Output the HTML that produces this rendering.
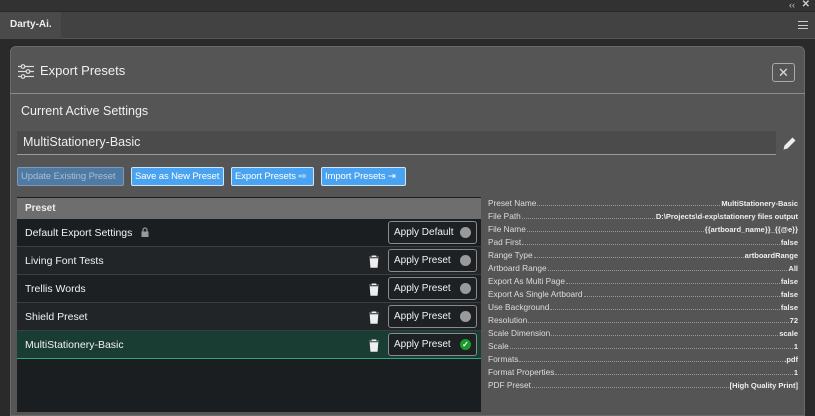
<!DOCTYPE html>
<html><head><style>
*{box-sizing:border-box;margin:0;padding:0}
body{width:815px;height:412px;overflow:hidden;background:#2a2a2a;font-family:"Liberation Sans",sans-serif;color:#eee;position:relative}
.abs{position:absolute}
.btn{position:absolute;top:167px;height:19px;background:#4aa3f0;border:1px solid #cfe6fb;border-radius:2px;color:#fff;font-size:9.5px;line-height:17px;padding:0 3px;white-space:nowrap;overflow:hidden;letter-spacing:-0.1px}
.row{position:absolute;left:17px;width:464px;height:28px;border-bottom:1px solid #3c3f42;font-size:10.5px;line-height:28px;padding-left:8px;color:#f2f2f2}
.ap{position:absolute;right:4px;top:2px;width:89px;height:23px;border:1px solid #8a8a8a;border-radius:3px;background:#1e2124;font-size:10px;line-height:21px;padding-left:5px}
.dot{position:absolute;right:5px;top:5px;width:11px;height:11px;border-radius:50%;background:#9a9a9a}
.tr{position:absolute;left:351px;top:8px;width:12px;height:13px}
.det{position:absolute;left:488px;width:310px;font-size:8.3px;height:13px;line-height:13px;color:#ddd;display:flex}
.det .k{white-space:nowrap}
.det .d{flex:1;border-bottom:1px dotted #999;margin:0 1px 4px}
.det .v{white-space:nowrap;font-size:7.5px;font-weight:bold;color:#eee}
</style></head><body>
<div class="abs" style="left:0;top:0;width:815px;height:11px;background:#323232"></div>
<div class="abs" style="right:20px;top:0;font-size:9px;color:#ccc;line-height:10px">‹‹</div>
<div class="abs" style="right:5px;top:0;font-size:10px;color:#ccc;line-height:10px;font-weight:bold">✕</div>
<div class="abs" style="left:0;top:11px;width:815px;height:28px;background:#424242;border-top:1px solid #2a2a2a;border-bottom:1px solid #555"></div>
<div class="abs" style="left:0;top:12px;width:61px;height:27px;background:#4a4a4a;font-size:10px;font-weight:bold;line-height:25px;padding-left:10px;color:#eee">Darty-Ai.</div>
<div class="abs" style="left:798px;top:21px;width:10px;height:8px;border-top:1px solid #ccc;border-bottom:1px solid #ccc"><div style="margin-top:2.5px;border-top:1px solid #ccc"></div></div>
<div class="abs" style="left:10px;top:46px;width:795px;height:370px;background:#555;border:1px solid #6a6a6a;border-radius:6px 6px 0 0"></div>
<div class="abs" style="left:10px;top:93px;width:795px;height:1px;background:#8a8a8a"></div>
<svg class="abs" style="left:18px;top:64px" width="16" height="15" viewBox="0 0 16 15" fill="none" stroke="#ddd" stroke-width="1.2"><line x1="0" y1="2.5" x2="16" y2="2.5"/><line x1="0" y1="7.5" x2="16" y2="7.5"/><line x1="0" y1="12.5" x2="16" y2="12.5"/><circle cx="5" cy="2.5" r="1.8" fill="#555"/><circle cx="10" cy="7.5" r="1.8" fill="#555"/><circle cx="5" cy="12.5" r="1.8" fill="#555"/></svg>
<div class="abs" style="left:40px;top:63px;font-size:13px;color:#f0f0f0">Export Presets</div>
<div class="abs" style="left:772px;top:63px;width:23px;height:19px;border:1px solid #aaa;border-radius:3px;text-align:center;font-size:13px;line-height:17px;color:#ddd">✕</div>
<div class="abs" style="left:21px;top:104px;font-size:12.5px;color:#f0f0f0">Current Active Settings</div>
<div class="abs" style="left:17px;top:131px;width:759px;height:24px;background:#4b4b4b;border-bottom:1px solid #999;font-size:12.5px;line-height:23px;padding-left:6px;color:#eee">MultiStationery-Basic</div>
<svg class="abs" style="left:782px;top:136px" width="15" height="15" viewBox="0 0 15 15"><path d="M10.5 1.5l3 3-8 8-4 1 1-4z" fill="#eee"/></svg>
<div class="btn" style="left:17px;width:107px;background:#4f7aa3;border-color:#7a9ab8;color:#a8bfd6">Update Existing Preset</div>
<div class="btn" style="left:131px;width:93px">Save as New Preset</div>
<div class="btn" style="left:231px;width:83px">Export Presets ⇨</div>
<div class="btn" style="left:321px;width:85px">Import Presets ⇥</div>
<div class="abs" style="left:17px;top:197px;width:464px;height:215px;background:#1b1e21"></div>
<div class="abs" style="left:17px;top:198px;width:464px;height:21px;background:#6e6e6e;font-size:10px;font-weight:bold;line-height:21px;padding-left:8px">Preset</div>
<div class="row" style="top:219px;background:#1b1e21">Default Export Settings <svg style="margin-left:6px;vertical-align:-1px" width="8" height="10" viewBox="0 0 8 10"><path d="M2 4.5V3a2 2 0 0 1 4 0v1.5" fill="none" stroke="#999" stroke-width="1.2"/><rect x="0.5" y="4.5" width="7" height="5.5" fill="#999"/></svg><div class="ap">Apply Default<div class="dot"></div></div></div>
<div class="row" style="top:247px;background:#222528">Living Font Tests<svg class="tr" viewBox="0 0 12 13"><path d="M1 2h10M4 2V0.8h4V2M2 3.5h8l-0.7 9H2.7z" fill="#eee" stroke="#eee" stroke-width="0.6"/></svg><div class="ap">Apply Preset<div class="dot"></div></div></div>
<div class="row" style="top:275px;background:#1d2023">Trellis Words<svg class="tr" viewBox="0 0 12 13"><path d="M1 2h10M4 2V0.8h4V2M2 3.5h8l-0.7 9H2.7z" fill="#eee" stroke="#eee" stroke-width="0.6"/></svg><div class="ap">Apply Preset<div class="dot"></div></div></div>
<div class="row" style="top:303px;background:#222528">Shield Preset<svg class="tr" viewBox="0 0 12 13"><path d="M1 2h10M4 2V0.8h4V2M2 3.5h8l-0.7 9H2.7z" fill="#eee" stroke="#eee" stroke-width="0.6"/></svg><div class="ap">Apply Preset<div class="dot"></div></div></div>
<div class="row" style="top:331px;background:#1a3d33;border-bottom:1px solid #2ea57a">MultiStationery-Basic<svg class="tr" viewBox="0 0 12 13"><path d="M1 2h10M4 2V0.8h4V2M2 3.5h8l-0.7 9H2.7z" fill="#eee" stroke="#eee" stroke-width="0.6"/></svg><div class="ap">Apply Preset<div class="dot" style="background:#1a9a2a;color:#fff;font-size:8px;line-height:11px;text-align:center;font-weight:bold">✓</div></div></div>
<div class="det" style="top:197px"><span class="k">Preset Name</span><span class="d"></span><span class="v">MultiStationery-Basic</span></div>
<div class="det" style="top:210px"><span class="k">File Path</span><span class="d"></span><span class="v">D:\Projects\d-exp\stationery files output</span></div>
<div class="det" style="top:223px"><span class="k">File Name</span><span class="d"></span><span class="v">{{artboard_name}}_{{@e}}</span></div>
<div class="det" style="top:236px"><span class="k">Pad First</span><span class="d"></span><span class="v">false</span></div>
<div class="det" style="top:249px"><span class="k">Range Type</span><span class="d"></span><span class="v">artboardRange</span></div>
<div class="det" style="top:262px"><span class="k">Artboard Range</span><span class="d"></span><span class="v">All</span></div>
<div class="det" style="top:275px"><span class="k">Export As Multi Page</span><span class="d"></span><span class="v">false</span></div>
<div class="det" style="top:288px"><span class="k">Export As Single Artboard</span><span class="d"></span><span class="v">false</span></div>
<div class="det" style="top:301px"><span class="k">Use Background</span><span class="d"></span><span class="v">false</span></div>
<div class="det" style="top:314px"><span class="k">Resolution</span><span class="d"></span><span class="v">72</span></div>
<div class="det" style="top:327px"><span class="k">Scale Dimension</span><span class="d"></span><span class="v">scale</span></div>
<div class="det" style="top:340px"><span class="k">Scale</span><span class="d"></span><span class="v">1</span></div>
<div class="det" style="top:353px"><span class="k">Formats</span><span class="d"></span><span class="v">.pdf</span></div>
<div class="det" style="top:366px"><span class="k">Format Properties</span><span class="d"></span><span class="v">1</span></div>
<div class="det" style="top:379px"><span class="k">PDF Preset</span><span class="d"></span><span class="v">[High Quality Print]</span></div>
</body></html>
